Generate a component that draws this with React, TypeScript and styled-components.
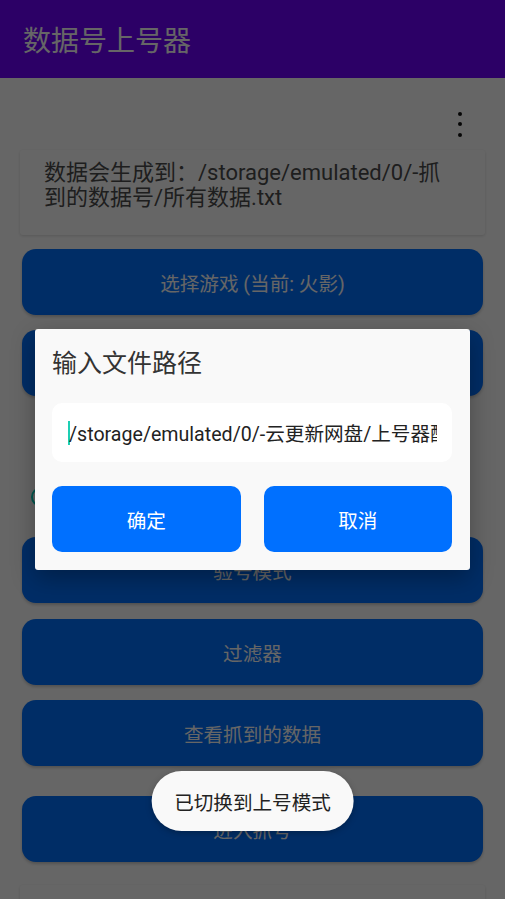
import React from "react";
import styled, { createGlobalStyle } from "styled-components";

const GlobalStyle = createGlobalStyle`
  html, body {
    margin: 0;
    padding: 0;
    overflow: hidden;
    background: #ffffff;
  }
  body {
    font-family: Roboto, "Noto Sans CJK SC", "Noto Sans", sans-serif;
  }
  * { box-sizing: border-box; }
`;

const Screen = styled.div`
  position: relative;
  width: 505px;
  height: 899px;
  overflow: hidden;
  background: #ffffff;
`;

const AppBar = styled.header`
  height: 78px;
  background: #6e00ff;
  display: flex;
  align-items: center;
  padding-left: 23px;
`;

const AppTitle = styled.h1`
  margin: 0;
  font-size: 28px;
  font-weight: 400;
  color: #ffffff;
  letter-spacing: 0;
`;

const Content = styled.main`
  display: flex;
  flex-direction: column;
  padding: 0 22px;
`;

const MenuRow = styled.div`
  height: 72px;
  display: flex;
  justify-content: flex-end;
  align-items: flex-end;
`;

const MoreButton = styled.div`
  width: 46px;
  height: 46px;
  margin-bottom: 3px;
  display: flex;
  flex-direction: column;
  align-items: center;
  justify-content: center;
  gap: 6.5px;
`;

const Dot = styled.span`
  width: 4px;
  height: 4px;
  border-radius: 50%;
  background: #111111;
`;

const InfoCard = styled.section<{ $mt?: number; $pt?: number }>`
  margin: ${(p) => p.$mt ?? 0}px -2px 0;
  padding: ${(p) => p.$pt ?? 10}px 12px 25px 24px;
  background: #ffffff;
  border-radius: 3px;
  box-shadow: 0 1px 3px rgba(0, 0, 0, 0.14);
  font-size: 22px;
  line-height: 25px;
  color: #4d4d4d;
  white-space: nowrap;
`;

const ActionButton = styled.button<{ $mt: number }>`
  margin-top: ${(p) => p.$mt}px;
  height: 66px;
  border: none;
  border-radius: 14px;
  background: #0070ff;
  color: #ffffff;
  font-family: inherit;
  font-size: 19.6px;
  box-shadow: 0 2px 3px rgba(0, 0, 0, 0.2);
`;

const ModeRow = styled.div`
  margin-top: 81px;
  height: 40px;
  display: flex;
  align-items: center;
  gap: 40px;
  padding-left: 9px;
`;

const RadioItem = styled.label`
  display: flex;
  align-items: center;
  gap: 12px;
  font-size: 19.6px;
  color: #333333;
`;

const RadioRing = styled.span<{ $checked: boolean }>`
  width: 20px;
  height: 20px;
  border-radius: 50%;
  border: 2px solid ${(p) => (p.$checked ? "#03dac5" : "#757575")};
  display: flex;
  align-items: center;
  justify-content: center;
  &::after {
    content: "";
    width: 10px;
    height: 10px;
    border-radius: 50%;
    background: ${(p) => (p.$checked ? "#03dac5" : "transparent")};
  }
`;

const Scrim = styled.div`
  position: absolute;
  inset: 0;
  background: rgba(0, 0, 0, 0.6);
  display: flex;
  align-items: center;
  justify-content: center;
`;

const Dialog = styled.div`
  width: 435px;
  background: #f9f9f9;
  border-radius: 3px;
  padding: 18px 18px 18px 17px;
  box-shadow: 0 8px 24px rgba(0, 0, 0, 0.3);
`;

const DialogTitle = styled.h2`
  margin: 0;
  font-size: 25px;
  line-height: 34px;
  font-weight: 400;
  color: #333333;
`;

const PathInput = styled.div`
  margin-top: 22px;
  height: 59px;
  background: #ffffff;
  border-radius: 10px;
  padding: 0 15px 0 16px;
  display: flex;
  align-items: center;
  overflow: hidden;
  white-space: nowrap;
  font-size: 19.6px;
  color: #222222;
`;

const InputText = styled.span`
  overflow: hidden;
  white-space: nowrap;
  display: flex;
  align-items: center;
`;

const Caret = styled.span`
  display: inline-block;
  flex: none;
  width: 2px;
  height: 24px;
  margin-right: -1px;
  background: #1dcfb4;
`;

const DialogButtons = styled.div`
  margin-top: 24px;
  display: grid;
  grid-template-columns: 1fr 1fr;
  gap: 23px;
`;

const DialogButton = styled.button`
  height: 66px;
  border: none;
  border-radius: 10px;
  background: #0070ff;
  color: #ffffff;
  font-family: inherit;
  font-size: 19.6px;
`;

const Toast = styled.div`
  position: absolute;
  left: 50%;
  bottom: 68px;
  transform: translateX(-50%);
  height: 60px;
  padding: 0 23px;
  border-radius: 30px;
  background: #f9f9f9;
  box-shadow: 0 2px 6px rgba(0, 0, 0, 0.25);
  display: flex;
  align-items: center;
  white-space: nowrap;
  font-size: 19.6px;
  color: #222222;
`;

export default function App() {
  return (
    <>
      <GlobalStyle />
      <Screen>
        <AppBar>
          <AppTitle>数据号上号器</AppTitle>
        </AppBar>
        <Content>
          <MenuRow>
            <MoreButton>
              <Dot />
              <Dot />
              <Dot />
            </MoreButton>
          </MenuRow>
          <InfoCard>
            数据会生成到：/storage/emulated/0/-抓
            <br />
            到的数据号/所有数据.txt
          </InfoCard>
          <ActionButton $mt={14}>选择游戏 (当前: 火影)</ActionButton>
          <ActionButton $mt={15}>设置上号文件路径</ActionButton>
          <ModeRow>
            <RadioItem>
              <RadioRing $checked />
              上号模式
            </RadioItem>
            <RadioItem>
              <RadioRing $checked={false} />
              抓号模式
            </RadioItem>
          </ModeRow>
          <ActionButton $mt={20}>验号模式</ActionButton>
          <ActionButton $mt={16}>过滤器</ActionButton>
          <ActionButton $mt={15}>查看抓到的数据</ActionButton>
          <ActionButton $mt={30}>进入抓号</ActionButton>
          <InfoCard $mt={23} $pt={20}>已抓到的数据号：0</InfoCard>
        </Content>
        <Scrim>
          <Dialog>
            <DialogTitle>输入文件路径</DialogTitle>
            <PathInput>
              <InputText>
                <Caret />
                /storage/emulated/0/-云更新网盘/上号器配置.txt
              </InputText>
            </PathInput>
            <DialogButtons>
              <DialogButton>确定</DialogButton>
              <DialogButton>取消</DialogButton>
            </DialogButtons>
          </Dialog>
        </Scrim>
        <Toast>已切换到上号模式</Toast>
      </Screen>
    </>
  );
}
